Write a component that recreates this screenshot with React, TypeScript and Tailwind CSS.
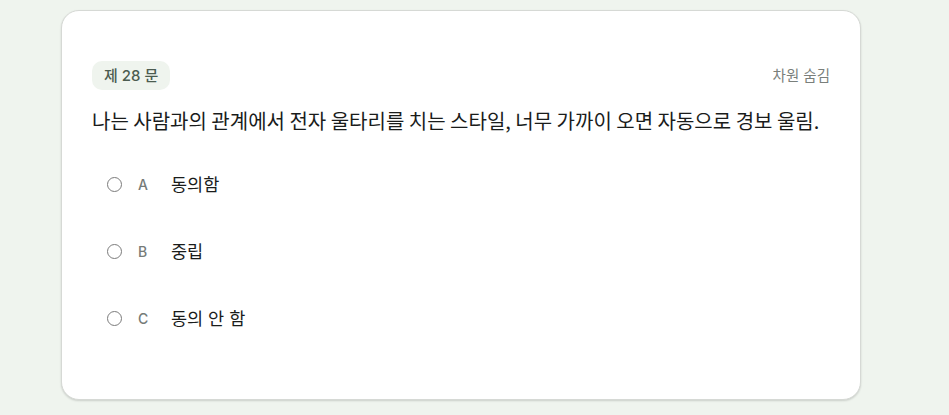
import { useState } from 'react';

const OPTIONS = [
  { key: 'A', label: '동의함' },
  { key: 'B', label: '중립' },
  { key: 'C', label: '동의 안 함' },
];

export default function App() {
  const [picked, setPicked] = useState<string | null>(null);

  return (
    <div
      className="min-h-[415px] w-full bg-[#eff4ee] pt-[10px]"
      style={{ fontFamily: '"Inter", "Noto Sans CJK KR", sans-serif' }}
    >
      <div className="ml-[61px] h-[390px] w-[800px] rounded-[18px] border border-[#d6d9d5] bg-white px-[30px] pt-[50px] shadow-[0_1px_2px_rgba(0,0,0,0.15)]">
        <div className="flex items-center justify-between">
          <span className="rounded-[10px] bg-[#eff4ee] px-[12px] py-[4px] text-[15px] font-medium leading-[21px] text-[#4b5c50]">
            제 28 문
          </span>
          <button className="text-[14.5px] text-[#7a7f7b]">차원 숨김</button>
        </div>

        <p
          className="mt-[16px] whitespace-nowrap text-[20px] leading-[30px] text-[#1a1c1b]"
          style={{ fontFamily: '"Noto Sans CJK KR", sans-serif' }}
        >
          나는 사람과의 관계에서 전자 울타리를 치는 스타일, 너무 가까이 오면 자동으로 경보 울림.
        </p>

        <div className="mt-[15px] flex flex-col">
          {OPTIONS.map((o) => (
            <label
              key={o.key}
              className="flex h-[67px] cursor-pointer items-center pl-[15px]"
              onClick={() => setPicked(o.key)}
            >
              <span
                className={
                  'h-[15px] w-[15px] rounded-full border-[1.5px] ' +
                  (picked === o.key ? 'border-[#4b5c50] bg-[#4b5c50]' : 'border-[#7b7b7b] bg-white')
                }
              />
              <span className="ml-[16px] w-[33px] text-[14px] font-medium leading-[20px] text-[#767b78]">{o.key}</span>
              <span className="text-[17.5px] leading-[24px] text-[#1a1c1b]">{o.label}</span>
            </label>
          ))}
        </div>
      </div>
    </div>
  );
}
